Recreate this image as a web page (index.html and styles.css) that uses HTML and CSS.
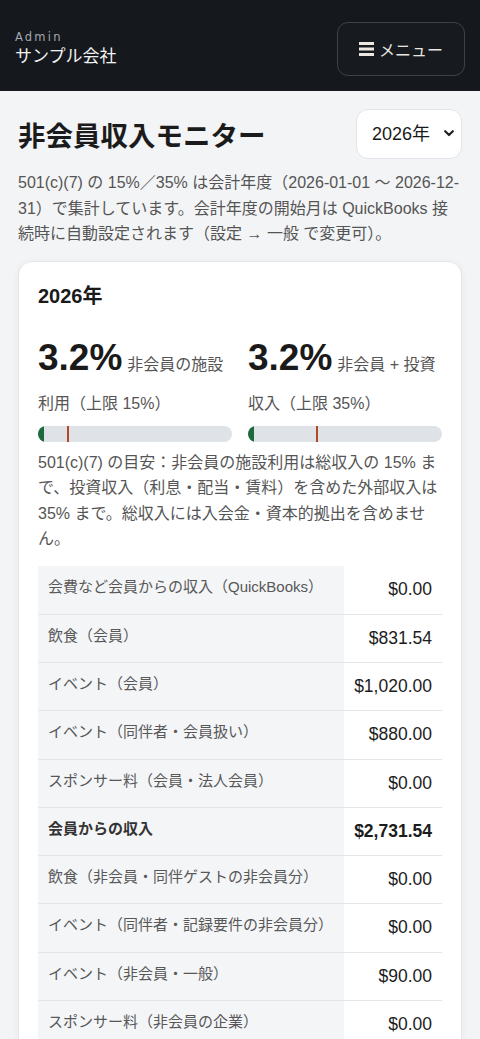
FILE: index.html
```html
<!DOCTYPE html>
<html lang="ja">
<head>
    <meta charset="UTF-8">
    <meta name="viewport" content="width=device-width, initial-scale=1.0">
    <title>非会員収入モニター</title>
    <link rel="stylesheet" href="styles.css">
</head>
<body>
    <header class="topbar">
        <div class="brand">
            <div class="brand-label">Admin</div>
            <div class="brand-name">サンプル会社</div>
        </div>
        <button class="menu-btn" type="button">
            <svg class="menu-icon" width="15" height="14" viewBox="0 0 15 14">
                <rect x="0" y="0" width="15" height="3" fill="currentColor"/>
                <rect x="0" y="5.5" width="15" height="3" fill="currentColor"/>
                <rect x="0" y="11" width="15" height="3" fill="currentColor"/>
            </svg>
            メニュー
        </button>
    </header>

    <main class="page">
        <div class="page-head">
            <h1>非会員収入モニター</h1>
            <div class="year-select">
                <select>
                    <option>2026年</option>
                    <option>2025年</option>
                    <option>2024年</option>
                </select>
                <svg class="chevron" width="10" height="7" viewBox="0 0 10 7">
                    <path d="M1.2 1.2 L5 5 L8.8 1.2" fill="none" stroke="#222" stroke-width="2.2" stroke-linecap="round" stroke-linejoin="round"/>
                </svg>
            </div>
        </div>

        <p class="lead">501(c)(7) の 15%／35% は会計年度（2026-01-01 〜 2026-12-31）で集計しています。会計年度の開始月は QuickBooks 接続時に自動設定されます（設定 → 一般 で変更可）。</p>

        <section class="card">
            <h2>2026年</h2>

            <div class="metrics">
                <div class="metric">
                    <div class="metric-value">3.2%<span class="metric-label">非会員の施設利用（上限 15%）</span></div>
                    <div class="bar">
                        <div class="bar-fill" style="width: 3.2%"></div>
                        <div class="bar-limit" style="left: 15%"></div>
                    </div>
                </div>
                <div class="metric">
                    <div class="metric-value">3.2%<span class="metric-label">非会員 + 投資収入（上限 35%）</span></div>
                    <div class="bar">
                        <div class="bar-fill" style="width: 3.2%"></div>
                        <div class="bar-limit" style="left: 35%"></div>
                    </div>
                </div>
            </div>

            <p class="note">501(c)(7) の目安：非会員の施設利用は総収入の 15% まで、投資収入（利息・配当・賃料）を含めた外部収入は 35% まで。総収入には入会金・資本的拠出を含めません。</p>

            <table class="breakdown">
                <tbody>
                    <tr><th>会費など会員からの収入（QuickBooks）</th><td>$0.00</td></tr>
                    <tr><th>飲食（会員）</th><td>$831.54</td></tr>
                    <tr><th>イベント（会員）</th><td>$1,020.00</td></tr>
                    <tr><th>イベント（同伴者・会員扱い）</th><td>$880.00</td></tr>
                    <tr><th>スポンサー料（会員・法人会員）</th><td>$0.00</td></tr>
                    <tr class="subtotal"><th>会員からの収入</th><td>$2,731.54</td></tr>
                    <tr><th>飲食（非会員・同伴ゲストの非会員分）</th><td>$0.00</td></tr>
                    <tr><th>イベント（同伴者・記録要件の非会員分）</th><td>$0.00</td></tr>
                    <tr><th>イベント（非会員・一般）</th><td>$90.00</td></tr>
                    <tr><th>スポンサー料（非会員の企業）</th><td>$0.00</td></tr>
                    <tr class="subtotal"><th>非会員からの収入</th><td>$90.00</td></tr>
                    <tr><th>投資収入（利息・配当・賃料）</th><td>$0.00</td></tr>
                    <tr class="subtotal"><th>総収入</th><td>$2,821.54</td></tr>
                </tbody>
            </table>
        </section>
    </main>
</body>
</html>
```

FILE: styles.css
```css
body {
    margin: 0;
    padding: 0;
    background-color: #f3f4f6;
    font-family: "Liberation Sans", "Noto Sans CJK JP", sans-serif;
    color: #1a1a1a;
}

.topbar {
    background-color: #15181d;
    display: flex;
    justify-content: space-between;
    align-items: center;
    padding: 22px 15px 15px 15px;
}

.brand-label {
    font-family: "DejaVu Sans", sans-serif;
    font-size: 11.5px;
    letter-spacing: 2.2px;
    color: #a3a9b1;
    line-height: 14px;
}

.brand-name {
    font-size: 17px;
    color: #f2f2f2;
    line-height: 24px;
    margin-top: 1px;
}

.menu-btn {
    display: flex;
    align-items: center;
    gap: 5px;
    width: 128px;
    height: 54px;
    justify-content: center;
    background-color: #171a1f;
    border: 1px solid #3c424b;
    border-radius: 11px;
    color: #e8e6e1;
    font-family: "Liberation Sans", "Noto Sans CJK JP", sans-serif;
    font-size: 16px;
    padding: 0;
}

.menu-icon {
    color: #ece8e0;
}

.page {
    padding: 18px 18px 40px;
}

.page-head {
    display: flex;
    justify-content: space-between;
    align-items: center;
}

.page-head h1 {
    margin: 0;
    font-size: 27.5px;
    font-weight: bold;
    color: #1b1b1b;
}

.year-select {
    position: relative;
}

.year-select select {
    appearance: none;
    -webkit-appearance: none;
    width: 106px;
    height: 50px;
    padding: 0 0 0 15px;
    border: 1px solid #e1e4e8;
    border-radius: 12px;
    background-color: #fff;
    font-family: "Liberation Sans", "Noto Sans CJK JP", sans-serif;
    font-size: 18px;
    color: #1a1a1a;
}

.chevron {
    position: absolute;
    right: 8px;
    top: 21px;
    pointer-events: none;
}

.lead {
    margin: 11px 0 14px;
    font-size: 16px;
    line-height: 25.6px;
    color: #555;
}

.card {
    background: #fff;
    border: 1px solid #e3e6ea;
    border-radius: 14px;
    box-shadow: 0 2px 8px rgba(0, 0, 0, 0.05);
    padding: 19px 19px 20px;
}

.card h2 {
    margin: 0 0 23px;
    font-size: 20px;
    line-height: 30px;
    font-weight: bold;
    color: #1a1a1a;
}

.metrics {
    display: grid;
    grid-template-columns: 1fr 1fr;
    gap: 16px;
    padding-top: 5.5px;
}

.metric-value {
    font-size: 37px;
    font-weight: bold;
    line-height: 38.5px;
    color: #1a1a1a;
}

.metric-label {
    font-size: 16px;
    font-weight: normal;
    color: #555;
    line-height: 20px;
    margin-left: 5px;
}

.bar {
    position: relative;
    height: 16px;
    margin-top: 9.5px;
    background-color: #dfe2e7;
    border-radius: 8px;
    overflow: hidden;
}

.bar-fill {
    height: 100%;
    background-color: #1d6a3c;
    border-radius: 8px 0 0 8px;
}

.bar-limit {
    position: absolute;
    top: 0;
    width: 2px;
    height: 100%;
    background-color: #b04a25;
}

.note {
    margin: 8px 0 15px;
    font-size: 16px;
    line-height: 25.4px;
    color: #555;
}

.breakdown {
    width: 100%;
    border-collapse: collapse;
}

.breakdown tr {
    border-bottom: 1px solid #e3e5e9;
}

.breakdown th {
    background-color: #f4f5f7;
    text-align: left;
    vertical-align: top;
    font-weight: normal;
    font-size: 15px;
    line-height: 22px;
    color: #585858;
    padding: 10px 10px 0;
}

.breakdown td {
    width: 76px;
    text-align: right;
    font-size: 17.5px;
    line-height: 23.3px;
    color: #1c1c1c;
    padding: 12px 10px;
    white-space: nowrap;
}

.breakdown .subtotal th {
    font-weight: bold;
    color: #333;
}

.breakdown .subtotal td {
    font-weight: bold;
}
```
